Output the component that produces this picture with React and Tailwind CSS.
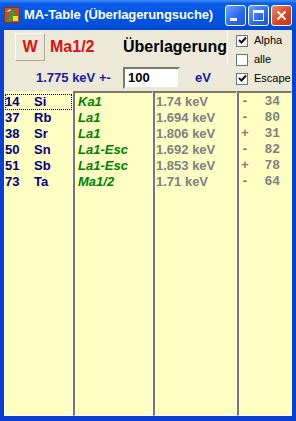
import React from 'react';

const rows = [
    { z: '14', el: 'Si', line: 'Ka1', e: '1.74 keV', d: '-  34' },
    { z: '37', el: 'Rb', line: 'La1', e: '1.694 keV', d: '-  80' },
    { z: '38', el: 'Sr', line: 'La1', e: '1.806 keV', d: '+  31' },
    { z: '50', el: 'Sn', line: 'La1-Esc', e: '1.692 keV', d: '-  82' },
    { z: '51', el: 'Sb', line: 'La1-Esc', e: '1.853 keV', d: '+  78' },
    { z: '73', el: 'Ta', line: 'Ma1/2', e: '1.71 keV', d: '-  64' },
];

const sunken = "border-t-2 border-l-2 border-t-[#7a7869] border-l-[#7a7869] border-r border-b border-r-white border-b-white bg-[#ffffc4] h-full pt-[1px]";

const CheckBox = ({ checked, label }) => (
    <div className="h-[19px] flex items-center gap-[6px]">
        <div className="w-[12px] h-[12px] bg-white border border-[#6b7280] flex items-center justify-center">
            {checked && (
                <svg width="9" height="9" viewBox="0 0 9 9">
                    <path d="M1 4 L3.5 6.5 L8 1.5" stroke="#111" strokeWidth="2" fill="none" />
                </svg>
            )}
        </div>
        <span className="text-[11px] text-black">{label}</span>
    </div>
);

const TitleButton = ({ kind }) => {
    const base = "w-[21px] h-[21px] rounded-[3px] border border-white flex items-center justify-center";
    if (kind === 'close') {
        return (
            <div className={base + " bg-[linear-gradient(135deg,#e88a6c,#d8431c_60%,#c23a15)]"}>
                <svg width="11" height="11" viewBox="0 0 11 11">
                    <path d="M1.5 1.5 L9.5 9.5 M9.5 1.5 L1.5 9.5" stroke="white" strokeWidth="2" />
                </svg>
            </div>
        );
    }
    return (
        <div className={base + " bg-[linear-gradient(135deg,#6fa0ff,#2a66f0_60%,#1f55dd)]"}>
            {kind === 'min' ? (
                <div className="w-[7px] h-[3px] bg-white self-end mb-[4px] mr-[5px]" />
            ) : (
                <div className="w-[11px] h-[11px] border border-white border-t-[3px]" />
            )}
        </div>
    );
};

export default function App() {
    return (
        <div className="w-[296px] h-[421px] flex flex-col bg-[#0a3fd6] font-['Liberation_Sans',Arial,sans-serif] overflow-hidden">
            {/* title bar */}
            <div className="h-[30px] flex items-center pl-[4px] pr-[4px] bg-[linear-gradient(180deg,#3d8cf8_0%,#0a5ce8_12%,#0055e5_50%,#0250dc_85%,#0046c8_100%)]">
                <svg width="16" height="16" viewBox="0 0 16 16" className="mr-[4px]">
                    <rect x="0" y="0" width="16" height="16" fill="#7b3a1a" />
                    <rect x="1" y="1" width="14" height="14" fill="#b8502a" />
                    <path d="M3 14 L8 3 L11 3 L8 14 Z" fill="#2fa32f" />
                    <path d="M9 9 L14 9 L14 14 L9 14 Z" fill="#f3e21c" />
                    <path d="M2 5 L6 2 L7 4 Z" fill="#e8e8a0" />
                </svg>
                <span className="text-white font-bold text-[13px] tracking-[-0.1px]">MA-Table (Überlagerungsuche)</span>
                <div className="ml-auto flex gap-[2px]">
                    <TitleButton kind="min" />
                    <TitleButton kind="max" />
                    <TitleButton kind="close" />
                </div>
            </div>

            {/* client */}
            <div className="flex-1 mx-[4px] mb-[5px] bg-[#ece9d8] flex flex-col">
                <div className="flex">
                    <div className="w-[224px] flex flex-col">
                        <div className="h-[34px] flex items-center pl-[11px] border-r border-r-white">
                            <div className="w-[30px] h-[28px] border border-t-white border-l-white border-r-[#aca899] border-b-[#aca899] flex items-center justify-center text-[#dd1111] font-bold text-[16px]">
                                W
                            </div>
                            <span className="ml-[5px] w-[73px] text-[#dd1111] font-bold text-[16px]">Ma1/2</span>
                            <span className="text-black font-bold text-[16px]">Überlagerung</span>
                        </div>
                        <div className="h-[22px] mt-[3px] flex items-center pl-[32px]">
                            <span className="w-[87px] text-[#1a1aa6] font-bold text-[13px]">1.775 keV +-</span>
                            <div className="w-[57px] h-[22px] bg-white border-2 border-t-[#7a7869] border-l-[#7a7869] border-r-[#ece9d8] border-b-[#ece9d8] flex items-center pl-[3px] text-[13px] font-bold text-black">
                                100
                            </div>
                            <span className="ml-[15px] text-[#1a1aa6] font-bold text-[13px]">eV</span>
                        </div>
                    </div>
                    <div className="flex-1 flex flex-col pt-[1px] pl-[8px]">
                        <CheckBox checked label="Alpha" />
                        <CheckBox label="alle" />
                        <CheckBox checked label="Escape" />
                    </div>
                </div>

                {/* lists */}
                <div className="flex-1 flex mt-[2px] text-[13px] font-bold leading-[16px]">
                    <div className="w-[69px] h-full bg-[#ffffc4] border-r border-b border-white pt-[3px] pl-[1px]">
                        {rows.map((r, i) => (
                            <div key={r.z} className={"h-[16px] flex text-[#000080] " + (i === 0 ? "outline-1 outline-dotted outline-black -outline-offset-1" : "")}>
                                <span className="w-[29px]">{r.z}</span>
                                <span>{r.el}</span>
                            </div>
                        ))}
                    </div>
                    <div className="w-[80px]">
                        <div className={sunken + " pl-[3px]"}>
                            {rows.map((r) => (
                                <div key={r.z} className="h-[16px] italic text-[#008000]">{r.line}</div>
                            ))}
                        </div>
                    </div>
                    <div className="w-[84px]">
                        <div className={sunken + " pl-[1px]"}>
                            {rows.map((r) => (
                                <div key={r.z} className="h-[16px] text-[#808080]">{r.e}</div>
                            ))}
                        </div>
                    </div>
                    <div className="flex-1">
                        <div className={sunken + " pl-[2px]"}>
                            {rows.map((r) => (
                                <div key={r.z} className="h-[16px] text-[#808080] font-['Liberation_Mono',monospace] whitespace-pre">{r.d}</div>
                            ))}
                        </div>
                    </div>
                </div>
            </div>
        </div>
    );
}
